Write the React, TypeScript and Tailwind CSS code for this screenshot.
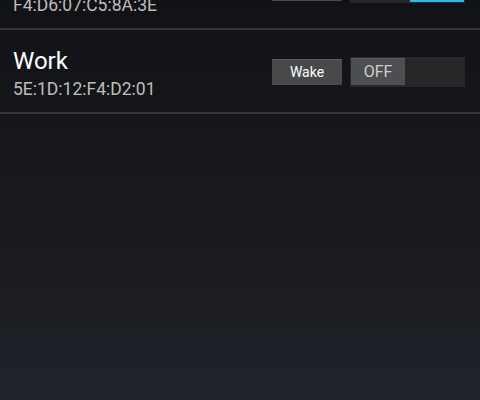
import { useState } from "react";

type Device = { name: string; mac: string; on: boolean };

const devices: Device[] = [
  { name: "Home", mac: "F4:D6:07:C5:8A:3E", on: true },
  { name: "Work", mac: "5E:1D:12:F4:D2:01", on: false },
];

function Toggle({ on }: { on: boolean }) {
  return (
    <div className="w-[115px] h-[30px] bg-[#262728] flex p-[1px]">
      {on ? (
        <>
          <div className="flex-1" />
          <div className="w-[54px] h-full bg-[#1f6f8f] border-b-2 border-[#33b5e5] flex items-center justify-center text-[16px] text-white">
            ON
          </div>
        </>
      ) : (
        <div className="w-[54px] h-[27px] bg-[#4d4e50] border-t border-[#5c5d5f] flex items-center justify-center text-[16px] text-[#cfcfcf]">
          OFF
        </div>
      )}
    </div>
  );
}

function DeviceRow({ d }: { d: Device }) {
  const [on] = useState(d.on);
  return (
    <div className="h-[84px] flex items-center justify-between pl-[13px] pr-[15px] pt-[2px] border-b-2 border-[#343538]">
      <div className="flex flex-col mt-[3px]">
        <span className="text-[24px] leading-[28px] text-white">{d.name}</span>
        <span className="text-[17.5px] leading-[22px] text-[#bdbdbd] mt-[3px]">{d.mac}</span>
      </div>
      <div className="flex items-center gap-[8px]">
        <button className="w-[70px] h-[26px] bg-[#48494b] border-t border-[#5a5b5d] text-[14px] text-white">
          Wake
        </button>
        <Toggle on={on} />
      </div>
    </div>
  );
}

export default function App() {
  return (
    <div
      className="w-[480px] h-[400px] overflow-hidden bg-gradient-to-b from-[#111215] via-[#17191c] to-[#20232a]"
      style={{ fontFamily: "Roboto, 'Noto Sans', sans-serif" }}
    >
      <div className="-mt-[54px]">
        {devices.map((d) => (
          <DeviceRow key={d.mac} d={d} />
        ))}
      </div>
    </div>
  );
}
